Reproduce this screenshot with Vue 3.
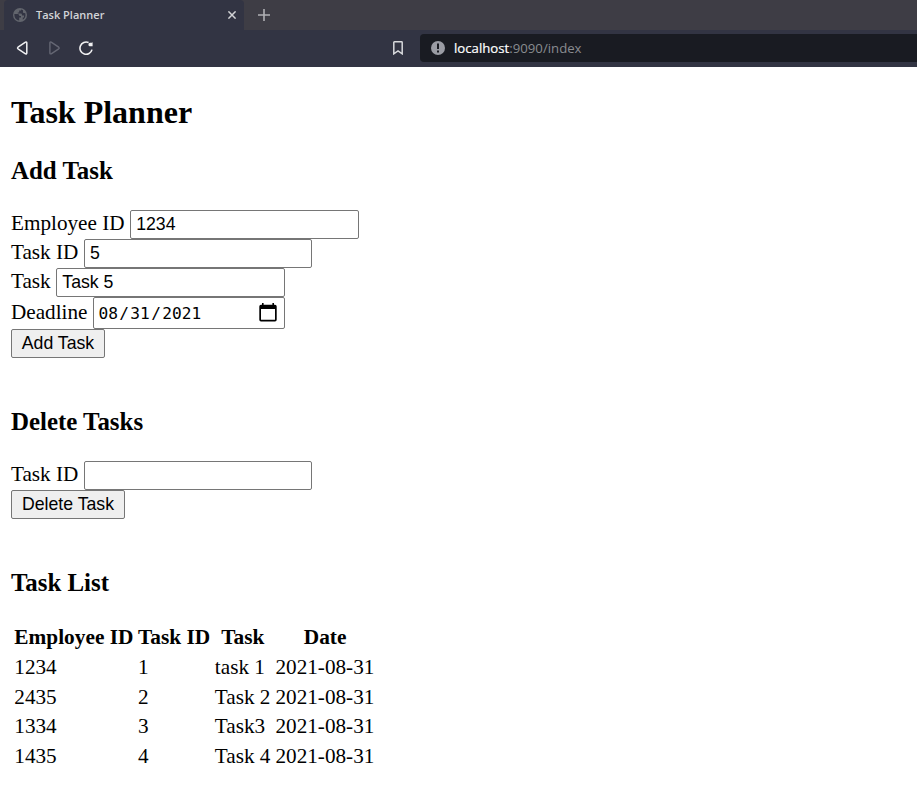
<script setup>
import { ref } from 'vue'

const employeeId = ref('1234')
const taskId = ref('5')
const taskName = ref('Task 5')
const deadline = ref(['08', '31', '2021'])
const deleteId = ref('')

const tasks = [
  { employee: '1234', id: '1', name: 'task 1', date: '2021-08-31' },
  { employee: '2435', id: '2', name: 'Task 2', date: '2021-08-31' },
  { employee: '1334', id: '3', name: 'Task3', date: '2021-08-31' },
  { employee: '1435', id: '4', name: 'Task 4', date: '2021-08-31' },
]
</script>

<template>
  <div class="window">
    <header class="chrome">
      <div class="tabs">
        <div class="tab">
          <svg class="globe" width="14" height="14" viewBox="0 0 14 14">
            <circle cx="7" cy="7" r="7" fill="#62656d" />
            <path d="M1.4 6H4.6Q6.4 6.2 6.4 8H8V9.4H6.2V12.4C3 12.2 1.2 9.4 1.4 6ZM8 1.5V2.6H6.2V4.6H4.8V5.6H8.2Q9 5.8 9 7.4H11V9.6H9.8V11.8C12.2 10.4 13 7.6 12.3 5.2L10 4.8V2.2Z" fill="#323443" />
          </svg>
          <span class="tab-title">Task Planner</span>
          <svg class="close" width="8" height="8" viewBox="0 0 8 8">
            <path d="M.4.4 7.6 7.6M7.6.4.4 7.6" stroke="#d2d3d6" stroke-width="1.5" />
          </svg>
        </div>
        <svg class="plus" width="12" height="12" viewBox="0 0 12 12">
          <path d="M6 0V12M0 6H12" stroke="#b0b0b4" stroke-width="1.6" />
        </svg>
      </div>
      <div class="toolbar">
        <svg class="nav-icon back" width="12" height="14" viewBox="0 0 12 14">
          <path d="M9.5 1.1 2 6.2Q1.1 7 2 7.8L9.5 12.8Q10.8 13.2 10.8 12V2Q10.8.7 9.5 1.1Z" fill="none" stroke="#f0f0f2" stroke-width="1.5" stroke-linejoin="round" />
        </svg>
        <svg class="nav-icon forward" width="12" height="14" viewBox="0 0 12 14">
          <path d="M2.2 1.1 9.7 6.2Q10.6 7 9.7 7.8L2.2 12.8Q.9 13.2.9 12V2Q.9.7 2.2 1.1Z" fill="none" stroke="#656774" stroke-width="1.4" stroke-linejoin="round" />
        </svg>
        <svg class="nav-icon reload" width="15" height="15" viewBox="0 0 15 15">
          <path d="M9.6 1.6A6.1 6.1 0 1 0 13 8.6" fill="none" stroke="#f0f0f2" stroke-width="1.6" />
          <path d="M9.4 3.4Q9.4 1.8 11 1.8H12.6L13.6 1.2V5.3H11Q9.4 5.3 9.4 3.4Z" fill="#f0f0f2" />
        </svg>
        <svg class="bookmark" width="10" height="14" viewBox="0 0 10 14">
          <path d="M.8 12.8V1.5Q.8.8 1.5.8H8.5Q9.2.8 9.2 1.5V12.8L5 9.9Z" fill="none" stroke="#d8d9dc" stroke-width="1.5" />
        </svg>
        <div class="address">
          <svg width="14" height="14" viewBox="0 0 14 14">
            <circle cx="7" cy="7" r="7" fill="#9a9ca4" />
            <path d="M6 2.6H8V8H6ZM6 9.4H8V11.4H6Z" fill="#191b22" />
          </svg>
          <span class="url"><b>localhost</b>:9090/index</span>
        </div>
      </div>
    </header>

    <main class="page">
      <h2>Task Planner</h2>

      <h3>Add Task</h3>
      <form @submit.prevent>
        <label class="row">Employee ID <input v-model="employeeId" type="text" /></label>
        <label class="row">Task ID <input v-model="taskId" type="text" /></label>
        <label class="row">Task <input v-model="taskName" type="text" /></label>
        <div class="row date-row">
          Deadline
          <div class="date">
            <span class="date-text"><span>{{ deadline[0] }}</span>/<span>{{ deadline[1] }}</span>/<span>{{ deadline[2] }}</span></span>
            <svg class="calendar" width="18" height="19" viewBox="0 0 18 19">
              <path d="M3 0H4.6V1.8H13.4V0H15V1.8H16Q17.7 1.8 17.7 3.5V16.8Q17.7 18.5 16 18.5H2Q.3 18.5.3 16.8V3.5Q.3 1.8 2 1.8H3ZM2 6V16.8H16V6Z" fill="#000" fill-rule="evenodd" />
            </svg>
          </div>
        </div>
        <button class="add">Add Task</button>
      </form>

      <h3>Delete Tasks</h3>
      <form @submit.prevent>
        <label class="row">Task ID <input v-model="deleteId" type="text" /></label>
        <button class="delete">Delete Task</button>
      </form>

      <h3>Task List</h3>
      <table>
        <thead>
          <tr><th>Employee ID</th><th>Task ID</th><th>Task</th><th>Date</th></tr>
        </thead>
        <tbody>
          <tr v-for="task in tasks" :key="task.id">
            <td>{{ task.employee }}</td>
            <td>{{ task.id }}</td>
            <td>{{ task.name }}</td>
            <td>{{ task.date }}</td>
          </tr>
        </tbody>
      </table>
    </main>
  </div>
</template>

<style>
body {
  margin: 0;
  background: #fff;
}
</style>

<style scoped>
.window {
  height: 805px;
  overflow: hidden;
  color: #000;
  font-family: "Liberation Serif", "Times New Roman", serif;
  font-size: 21.2px;
}
svg {
  display: block;
  flex: none;
}
.chrome {
  height: 67px;
  background: #323443;
}
.tabs {
  display: flex;
  align-items: center;
  height: 30px;
  padding-left: 4px;
  background: #3e3d45;
}
.tab {
  display: flex;
  align-items: center;
  box-sizing: border-box;
  width: 240px;
  height: 30px;
  padding: 0 8px 0 9px;
  border-radius: 4px 4px 0 0;
  background: #323443;
}
.tab-title {
  flex: 1;
  margin-left: 9px;
  color: #d3d4d8;
  font-family: "Open Sans", sans-serif;
  font-size: 11px;
  font-weight: 600;
  line-height: 30px;
}
.plus {
  margin-left: 14px;
}
.toolbar {
  display: flex;
  align-items: center;
  height: 36px;
  padding-left: 16px;
}
.forward {
  margin-left: 21px;
}
.reload {
  margin-left: 18px;
}
.bookmark {
  margin-left: 299px;
}
.address {
  display: flex;
  flex: 1;
  align-items: center;
  height: 28px;
  margin-left: 17px;
  padding-left: 11px;
  border-radius: 4px 0 0 4px;
  background: #191b22;
}
.url {
  margin-left: 9px;
  color: #898b90;
  font-family: "Open Sans", sans-serif;
  font-size: 13.2px;
}
.url b {
  color: #fff;
  font-weight: 400;
  -webkit-text-stroke: 0.2px #fff;
}
.page {
  padding: 27px 0 0 11px;
}
h2,
h3 {
  margin: 0;
  font-weight: 700;
}
h2 {
  height: 62px;
  font-size: 32px;
  line-height: 37px;
}
h3 {
  height: 54px;
  font-size: 24.9px;
  line-height: 29px;
}
form {
  height: 197px;
}
form + h3 + form {
  height: 107px;
}
.row {
  display: flex;
  gap: 5.6px;
  height: 29px;
  line-height: 27px;
}
.date-row {
  height: 32px;
  line-height: 31px;
}
input,
button,
.date {
  box-sizing: border-box;
  border: 1px solid #767676;
  border-radius: 2px;
  color: #000;
  font-family: "Liberation Sans", Arial, sans-serif;
  font-size: 17.7px;
}
input {
  width: 228.5px;
  height: 29px;
  margin: 0;
  padding: 0 5px;
  background: #fff;
  outline: none;
}
.date {
  display: flex;
  align-items: center;
  justify-content: space-between;
  width: 192px;
  height: 32px;
  padding: 0 7.2px 0 3px;
}
.date-text {
  font-family: "DejaVu Sans Mono", monospace;
  font-size: 16.2px;
}
.date-text span {
  padding: 0 1.33px;
}
.calendar {
  margin-bottom: 2px;
}
button {
  display: block;
  height: 29px;
  padding: 0;
  background: #efefef;
  line-height: 27px;
}
.add {
  width: 94px;
}
.delete {
  width: 114px;
}
table {
  border-collapse: separate;
  border-spacing: 2.67px;
}
th,
td {
  box-sizing: content-box;
  height: 25px;
  padding: 1.33px;
  line-height: 25px;
  white-space: nowrap;
}
th {
  font-size: 21.33px;
}
td {
  padding-right: 1.7px;
}
</style>
